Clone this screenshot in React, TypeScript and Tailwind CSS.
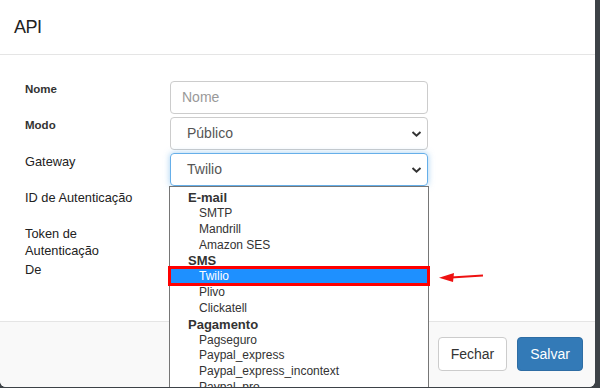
import React from 'react';

const font = { fontFamily: '"Liberation Sans", Arial, sans-serif' };

function Chevron() {
  return (
    <svg width="11" height="7" viewBox="0 0 11 7" className="absolute right-[5px] top-1/2 -translate-y-1/2">
      <polyline points="1.5,1.5 5.5,5.2 9.5,1.5" fill="none" stroke="#333" strokeWidth="2" />
    </svg>
  );
}

type Opt = { label: string; group?: boolean; active?: boolean };

const options: Opt[] = [
  { label: 'E-mail', group: true },
  { label: 'SMTP' },
  { label: 'Mandrill' },
  { label: 'Amazon SES' },
  { label: 'SMS', group: true },
  { label: 'Twilio', active: true },
  { label: 'Plivo' },
  { label: 'Clickatell' },
  { label: 'Pagamento', group: true },
  { label: 'Pagseguro' },
  { label: 'Paypal_express' },
  { label: 'Paypal_express_incontext' },
  { label: 'Paypal_pro' },
];

export default function App() {
  return (
    <div className="w-[600px] h-[388px] bg-[#3d4247] overflow-hidden" style={font}>
      <div className="relative w-[595px] h-[387px] bg-white rounded-b-[6px] overflow-hidden flex flex-col">
        {/* Header */}
        <div className="h-[55px] shrink-0 border-b border-[#e5e5e5] flex items-center px-[14px]">
          <h4 className="text-[18px] text-[#222] tracking-[-0.5px]">API</h4>
        </div>

        {/* Body */}
        <div className="h-[266px] shrink-0 pt-[26px] pl-[25px]">
          <div className="flex flex-col">
            <div className="flex h-[36px]">
              <label className="w-[145px] text-[11.5px] font-bold text-[#333] leading-[17px]">Nome</label>
              <div className="w-[258px] h-[33px] border border-[#ccc] rounded-[4px] flex items-center px-[11px] text-[14px] text-[#999]">Nome</div>
            </div>
            <div className="flex h-[36px]">
              <label className="w-[145px] text-[11.5px] font-bold text-[#333] leading-[17px]">Modo</label>
              <div className="relative w-[258px] h-[33px] border border-[#ccc] rounded-[4px] flex items-center px-[16px] text-[14px] text-[#555]">
                Público
                <Chevron />
              </div>
            </div>
            <div className="flex h-[36px]">
              <label className="w-[145px] text-[12.8px] text-[#222] leading-[17px]">Gateway</label>
              <div className="relative w-[258px] h-[33px] border border-[#66afe9] rounded-[4px] shadow-[0_0_6px_rgba(102,175,233,0.6)] flex items-center px-[16px] text-[14px] text-[#555]">
                Twilio
                <Chevron />
              </div>
            </div>
            <div className="flex h-[36px]">
              <label className="w-[145px] text-[12.8px] text-[#222] leading-[17px]">ID de Autenticação</label>
            </div>
            <div className="flex h-[36px]">
              <label className="w-[145px] text-[12.8px] text-[#222] leading-[17px]">Token de<br />Autenticação</label>
            </div>
            <div className="flex h-[36px]">
              <label className="w-[145px] text-[12.8px] text-[#222] leading-[17px]">De</label>
            </div>
          </div>
        </div>

        {/* Footer */}
        <div className="flex-1 border-t border-[#e5e5e5] bg-[#f9f9f9] flex justify-end items-start pt-[15px] pr-[12px] gap-[10px]">
          <button className="w-[69px] h-[34px] border border-[#ccc] rounded-[4px] bg-white text-[14px] text-[#333]">Fechar</button>
          <button className="w-[66px] h-[34px] border border-[#2e6da4] rounded-[4px] bg-[#337ab7] text-[14px] text-white">Salvar</button>
        </div>

        {/* Open select list */}
        <div className="absolute left-[169px] top-[186px] w-[260px] h-[210px] bg-white border border-[#767676] pt-[3px]">
          {options.map((o) => (
            <div
              key={o.label}
              className={
                o.group
                  ? 'h-[15.85px] leading-[15.85px] pl-[18px] text-[13px] font-bold text-[#333]'
                  : o.active
                  ? 'h-[15.85px] leading-[15.85px] pl-[29px] text-[12px] text-white bg-[#1e90ff]'
                  : 'h-[15.85px] leading-[15.85px] pl-[29px] text-[12px] text-[#333]'
              }
            >
              {o.label}
            </div>
          ))}
        </div>

        {/* Annotation box */}
        <div className="absolute left-[168px] top-[266px] w-[262px] h-[20px] border-[3px] border-[#ff0000]" />

        {/* Annotation arrow */}
        <svg className="absolute left-[437px] top-[268px]" width="50" height="18" viewBox="0 0 50 18">
          <line x1="46" y1="7.5" x2="14" y2="9.5" stroke="#ee1111" strokeWidth="2" />
          <polygon points="2,9.8 17,5 16,14" fill="#ee1111" />
        </svg>
      </div>
    </div>
  );
}
